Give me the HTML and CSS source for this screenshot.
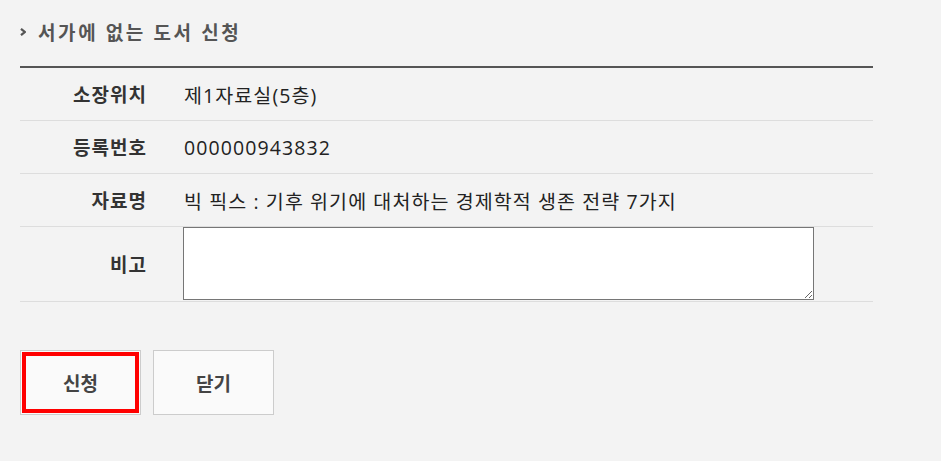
FILE: index.html
```html
<!DOCTYPE html>
<html lang="ko">

<head>
  <meta charset="UTF-8">
  <meta name="viewport" content="width=device-width, initial-scale=1.0">
  <title>서가에 없는 도서 신청</title>
  <link rel="stylesheet" href="styles.css">
</head>

<body>
  <div class="request-box">
    <h3 class="title">
      <svg class="arrow" width="6" height="8" viewBox="0 0 6 8"><path d="M1 0.8 L4.8 4 L1 7.2" fill="none" stroke="#555" stroke-width="2.2"/></svg>
      서가에 없는 도서 신청
    </h3>

    <table class="form-table">
      <tbody>
        <tr>
          <th>소장위치</th>
          <td>제1자료실(5층)</td>
        </tr>
        <tr>
          <th>등록번호</th>
          <td>000000943832</td>
        </tr>
        <tr>
          <th>자료명</th>
          <td>빅 픽스 : 기후 위기에 대처하는 경제학적 생존 전략 7가지</td>
        </tr>
        <tr class="memo-row">
          <th>비고</th>
          <td><textarea class="memo"></textarea></td>
        </tr>
      </tbody>
    </table>

    <div class="buttons">
      <button class="btn btn-focus">신청</button>
      <button class="btn">닫기</button>
    </div>
  </div>
</body>

</html>
```

FILE: styles.css
```css
body {
  margin: 0;
  background-color: #f3f3f3;
  font-family: "Open Sans", "Noto Sans CJK KR", sans-serif;
  color: #333;
}

.request-box {
  padding: 0 20px;
}

.title {
  display: flex;
  align-items: center;
  margin: 0 0 22px;
  padding-top: 20px;
  height: 24px;
  font-size: 19px;
  font-weight: 700;
  letter-spacing: 2.6px;
  color: #555;

  .arrow {
    margin-right: 12px;
  }
}

.form-table {
  width: 853px;
  border-collapse: separate;
  border-spacing: 0;
  border-top: 2px solid #555;
}

th,
td {
  height: 52px;
  padding: 0;
  border-bottom: 1px solid #ddd;
}

th {
  width: 127px;
  padding-right: 29px;
  text-align: right;
  font-size: 19px;
  font-weight: 700;
  letter-spacing: 1px;
  color: #333;
}

td {
  padding-left: 8px;
  font-size: 19.5px;
  letter-spacing: 1.1px;
  color: #222;
}

.memo-row {
  td {
    height: auto;
    padding: 0 0 1px 7px;
    vertical-align: top;
  }
}

.memo {
  display: block;
  box-sizing: border-box;
  width: 631px;
  height: 73px;
  margin: 0;
  border: 1px solid #767676;
  background: #fff;
}

.buttons {
  display: flex;
  gap: 12px;
  margin-top: 48px;
}

.btn {
  box-sizing: border-box;
  width: 121px;
  height: 65px;
  border: 1px solid #ccc;
  background-color: #fafafa;
  font-family: "Noto Sans CJK KR", sans-serif;
  font-size: 19px;
  font-weight: 700;
  color: #444;
}

.btn-focus {
  box-shadow: inset 0 0 0 1px #fafafa, inset 0 0 0 5px #f00;
}
```
